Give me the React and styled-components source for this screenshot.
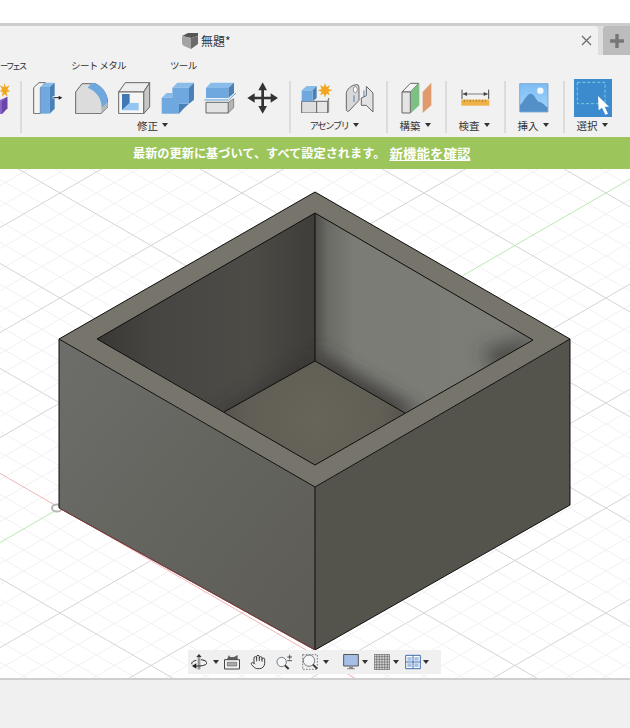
import styled, { createGlobalStyle } from "styled-components";
import { Hand } from "lucide-react";

const GlobalStyle = createGlobalStyle`
  html, body {
    margin: 0;
    padding: 0;
    background: #fff;
  }
  body {
    font-family: "Noto Sans CJK JP", "Noto Sans", sans-serif;
  }
`;

const Page = styled.div`
  width: 630px;
  height: 728px;
  display: flex;
  flex-direction: column;
  overflow: hidden;
  background: #fff;
`;
const TopStrip = styled.div`
  height: 23px;
  background: #fff;
  border-bottom: 3px solid #cdcdcd;
`;
const TabBar = styled.div`
  height: 29px;
  display: flex;
  background: #dedede;
`;
const FileTab = styled.div`
  width: 598px;
  display: flex;
  align-items: center;
  padding: 0 5px 0 182px;
  box-sizing: border-box;
  background: #f1f1f1;
  border-top-right-radius: 4px;
`;
const FileTitle = styled.span`
  margin-left: 3px;
  font-size: 12px;
  color: #333;
  flex: 1;
`;
const CloseButton = styled.span`
  width: 14px;
  height: 14px;
  display: flex;
  align-items: center;
  justify-content: center;
`;
const NewTab = styled.div`
  width: 27px;
  margin-left: 5px;
  display: flex;
  align-items: center;
  justify-content: center;
  background: #bcbcbc;
  border-top-left-radius: 3px;
`;
const Toolbar = styled.div`
  height: 82px;
  background: #f1f1f1;
  display: flex;
  flex-direction: column;
`;
const SectionRow = styled.div`
  height: 24px;
  display: flex;
  gap: 44px;
  padding-top: 3px;
  box-sizing: border-box;
`;
const SectionName = styled.span`
  font-size: 9.5px;
  letter-spacing: -0.6px;
  line-height: 15px;
  color: #333;
  white-space: nowrap;
`;
const ClippedSection = styled(SectionName)`
  width: 27px;
  font-size: 8.5px;
  letter-spacing: -2.1px;
`;
const Ribbon = styled.div`
  flex: 1;
  display: flex;
  align-items: flex-start;
`;
const Divider = styled.div`
  width: 2px;
  height: 52px;
  margin-top: 2px;
  background: #dcdcdc;
`;
const Group = styled.div`
  width: ${(p) => p.$width}px;
  display: flex;
  flex-direction: column;
`;
const IconRow = styled.div`
  height: 38px;
  display: flex;
  align-items: center;
  gap: ${(p) => p.$gap || 0}px;
  padding-left: ${(p) => p.$left || 0}px;
`;
const GroupLabel = styled.div`
  height: 16px;
  display: flex;
  align-items: center;
  justify-content: center;
  gap: 4px;
  padding-right: ${(p) => p.$shift || 0}px;
  font-size: ${(p) => (p.$narrow ? 9.5 : 10.5)}px;
  letter-spacing: ${(p) => (p.$narrow ? -1.6 : 0)}px;
  color: #333;
  white-space: nowrap;
`;
const Caret = styled.span`
  width: 0;
  height: 0;
  border-left: 3px solid transparent;
  border-right: 3px solid transparent;
  border-top: 4px solid #333;
`;
const Banner = styled.div`
  height: 32px;
  display: flex;
  align-items: center;
  padding-left: 133px;
  background: #9cc55b;
  color: #fff;
  font-size: 12.2px;
  font-weight: 700;
  white-space: nowrap;
`;
const BannerLink = styled.a`
  margin-left: 4px;
  color: #fff;
  font-size: 13.5px;
  text-decoration: underline;
`;
const Viewport = styled.div`
  position: relative;
  height: 509px;
  overflow: hidden;
  background: #fff;
`;
const Scene = styled.svg`
  display: block;
`;
const NavBar = styled.div`
  position: absolute;
  left: 188px;
  bottom: 4px;
  width: 253px;
  height: 24px;
  display: flex;
  align-items: center;
  background: #f0f0f0;
`;
const NavItem = styled.span`
  display: flex;
  margin-left: ${(p) => p.$left}px;
`;
const NavCaret = styled(Caret)`
  margin-left: ${(p) => p.$left}px;
`;
const StatusArea = styled.div`
  flex: 1;
  background: #f0f0f0;
  border-top: 2px solid #cfcfcf;
`;

// drawn on a 3x grid, so a 96 wide box comes out 32px on the page
function Icon({ box, children }) {
  const [, , w, h] = box.split(" ").map(Number);
  return (
    <svg width={w / 3} height={h / 3} viewBox={box} strokeLinejoin="round">
      {children}
    </svg>
  );
}

const BLUE = "#6fa8de";
const BLUE_TOP = "#8abcea";
const BLUE_SIDE = "#4b80b6";
const EDGE = "#666";

const PressPull = () => (
  <Icon box="98 95 96 97">
    <path d="M100 190V112L116 97H135L120 112V190Z" fill="#f4f4f4" stroke={EDGE} strokeWidth="3" />
    <path d="M120 110H148V190H120Z" fill={BLUE} />
    <path d="M120 110L134 97H163L148 110Z" fill={BLUE_TOP} />
    <path d="M148 110L163 97V175L148 190Z" fill={BLUE_SIDE} />
    <path d="M157 141H177" stroke="#f4f4f4" strokeWidth="7" />
    <path d="M159 142H177" stroke="#222" strokeWidth="3" />
    <path d="M175 136L186 142L175 148Z" fill="#222" />
  </Icon>
);

const Fillet = () => (
  <Icon box="224 95 100 97">
    <path d="M226 190V125L245 100H285C305 110 322 130 322 160V170L303 190Z" fill="#dcdcdc" stroke={EDGE} strokeWidth="3" />
    <path d="M303 190V172L322 155V170Z" fill="#b9b9b9" />
    <path d="M262 112L274 97C300 100 322 122 322 156L304 172C304 145 288 122 262 112Z" fill={BLUE} />
  </Icon>
);

const Shell = () => (
  <Icon box="353 95 98 97">
    <path d="M355 125L375 97H448L430 125Z" fill="#eeeeee" stroke={EDGE} strokeWidth="3" />
    <path d="M430 125L448 97V170L430 190Z" fill="#c6c6c6" stroke={EDGE} strokeWidth="3" />
    <path d="M355 125H430V190H355Z" fill="#f5f5f5" stroke={EDGE} strokeWidth="3" />
    <path d="M365 131H388V158L365 180Z" fill="#3f78b4" />
    <path d="M388 158H415V180H365Z" fill="#93c5f2" />
  </Icon>
);

const Combine = () => (
  <Icon box="1 95 100 97">
    <path d="M35 112L50 97H100L85 112Z" fill={BLUE_TOP} />
    <path d="M3 142L18 128H35V142Z" fill={BLUE_TOP} />
    <path d="M85 112L100 97V148L85 160Z" fill={BLUE_SIDE} />
    <path d="M55 160H85L70 174L55 190Z" fill={BLUE_SIDE} />
    <path d="M3 142H35V112H85V160H55V190H3Z" fill={BLUE} />
  </Icon>
);

const Split = () => (
  <Icon box="132 95 98 97">
    <path d="M138 113L152 97H222L205 113Z" fill={BLUE_TOP} />
    <path d="M205 113L222 97V128L205 143Z" fill={BLUE_SIDE} />
    <path d="M138 113H205V143H138Z" fill={BLUE} />
    <path d="M138 156H205V188H138Z" fill="#e3e3e3" stroke={EDGE} strokeWidth="3" />
    <path d="M205 188L221 172V145L205 156Z" fill="#b5b5b5" stroke={EDGE} strokeWidth="2" />
    <path d="M133 149H206L228 128" fill="none" stroke="#5b9fd8" strokeWidth="3" />
  </Icon>
);

const Move = () => (
  <Icon box="262 95 94 96">
    <path
      d="M309 96L322 120H313V139H333V129L355 143L333 157V147H313V167H322L309 190L296 167H305V147H285V157L263 143L285 129V139H305V120H296Z"
      fill="#333"
    />
  </Icon>
);

const Assembly = () => (
  <Icon box="903 250 96 92">
    <path d="M905 305H950V340H905Z" fill="#dedede" stroke={EDGE} strokeWidth="3" />
    <path d="M950 305H983V340H950Z" fill="#e6e6e6" stroke={EDGE} strokeWidth="3" />
    <path d="M983 340L986 335V295L983 305Z" fill="#bbb" stroke={EDGE} strokeWidth="2" />
    <path d="M905 272L920 259H950L938 272Z" fill={BLUE_TOP} />
    <path d="M938 272L950 259V295L938 305Z" fill={BLUE_SIDE} />
    <path d="M905 272H938V305H905Z" fill={BLUE} />
    <path
      d="M975 250L979 262L990 257L985 268L997 272L985 276L990 287L979 282L975 294L971 282L960 287L965 276L953 272L965 268L960 257L971 262Z"
      fill="#f2a51f"
    />
  </Icon>
);

const Joint = () => (
  <Icon box="76 98 88 90">
    <path d="M80 178V130C80 118 95 103 112 103C118 103 118 110 118 120V150L88 182C84 184 80 182 80 178Z" fill="#d8d8d8" stroke={EDGE} strokeWidth="3" />
    <ellipse cx="107" cy="118" rx="6" ry="9" fill="#fff" stroke={EDGE} strokeWidth="2" />
    <path d="M125 143L140 136V108L160 128V185L140 165H125Z" fill="#e2e2e2" stroke={EDGE} strokeWidth="3" />
    <path d="M103 135V155M133 120V140" stroke="#4b80b6" strokeWidth="3" />
  </Icon>
);

const Plane = () => (
  <Icon box="242 95 92 95">
    <path d="M245 125L270 99H295L270 125Z" fill="#f4f4f4" stroke={EDGE} strokeWidth="3" />
    <path d="M245 125H270V188H245Z" fill="#e4e4e4" stroke={EDGE} strokeWidth="3" />
    <path d="M272 122L297 97V165L272 188Z" fill="#7dc084" />
    <path d="M307 125L333 97V165L307 188Z" fill="#e09a6c" />
  </Icon>
);

const Measure = () => (
  <Icon box="452 268 87 52">
    <path d="M455 270V298M535 270V298" stroke="#444" strokeWidth="3" />
    <path d="M458 283H532" stroke="#444" strokeWidth="2" />
    <path d="M457 283L470 277V289ZM533 283L520 277V289Z" fill="#444" />
    <path d="M453 300H537V318H453Z" fill="#efb045" />
    <path d="M462 300V307M471 300V305M480 300V307M489 300V305M498 300V307M507 300V305M516 300V307M525 300V305" stroke="#8a6a2a" strokeWidth="2" />
  </Icon>
);

const InsertImage = () => (
  <Icon box="626 249 90 89">
    <defs>
      <linearGradient id="sky" x1="0" y1="0" x2="0" y2="1">
        <stop offset="0" stopColor="#7cbcf4" />
        <stop offset="1" stopColor="#a8d6fb" />
      </linearGradient>
    </defs>
    <path d="M628 251H713V336H628Z" fill="url(#sky)" stroke="#5f93c0" strokeWidth="2" />
    <path d="M629 315C640 305 650 280 662 281C674 282 678 305 688 306C698 307 706 320 712 322V335H629Z" fill="#5490c8" />
    <circle cx="690" cy="272" r="9.5" fill="#f4f8fb" />
  </Icon>
);

const SelectTool = () => (
  <Icon box="792 237 114 114">
    <path d="M792 237H906V351H792Z" fill="#3d8bcf" />
    <path d="M802 247H885V311H802Z" fill="none" stroke="#86dce0" strokeWidth="2.5" strokeDasharray="9 6" />
    <path d="M864 288L897 320H884L894 341L886 344L876 323L866 331Z" fill="#fff" />
  </Icon>
);

const SurfaceStub = () => (
  <Icon box="0 246 30 98">
    <path d="M0 300L22 290V325L6 342H0Z" fill="#8a63c8" />
    <path d="M6 304L22 290V325L6 342Z" fill="#6a46a8" />
    <path
      d="M14 248L17 262L29 256L22 268L30 274L20 276L22 290L14 282L6 290L8 276L0 274L6 268L0 256L11 262Z"
      fill="#f2a51f"
    />
  </Icon>
);

const CubeMark = () => (
  <svg width="16" height="16" viewBox="0 0 16 16">
    <path d="M0 3L6 0H16V3L9 5Z" fill="#555" />
    <path d="M0 3L9 5V16L2 13Q0 12 0 10Z" fill="#a3a3a3" />
    <path d="M9 5L16 3V11L9 16Z" fill="#6b6b6b" />
  </svg>
);

const NavIcon = ({ children }) => (
  <svg width="16" height="16" viewBox="0 0 48 48" strokeLinejoin="round">
    {children}
  </svg>
);

const OrbitIcon = () => (
  <NavIcon>
    <path d="M24 6V46" stroke="#333" strokeWidth="7" />
    <path d="M24 6V46" stroke="#fff" strokeWidth="3" />
    <path d="M24 0L32 9H16Z" fill="#333" />
    <path d="M30 17C44 19 50 24 46 30C42 34 30 37 14 36" fill="none" stroke="#222" strokeWidth="3" />
    <path d="M16 19C6 21 0 26 3 31" fill="none" stroke="#222" strokeWidth="3" />
    <path d="M16 28L3 36L16 44Z" fill="#222" />
  </NavIcon>
);

const HomeIcon = () => (
  <NavIcon>
    <path d="M8 17L15 3L18 9H30L41 3V17Z" fill="#5f5f5f" />
    <path d="M1.5 17H46.5V45H1.5Z" fill="#f2f2f2" stroke="#444" strokeWidth="3" />
    <path d="M10 25H38V36H10Z" fill="#aaa" stroke="#444" strokeWidth="1.5" />
  </NavIcon>
);

const ZoomIcon = () => (
  <NavIcon>
    <circle cx="17" cy="24" r="14" fill="#f4f6f8" stroke="#5d6670" strokeWidth="2.5" />
    <path d="M27 34L38 45" stroke="#333" strokeWidth="6" />
    <path d="M41 2V16M34 9H48M34 20H48" stroke="#333" strokeWidth="2.5" />
  </NavIcon>
);

const FitIcon = () => (
  <NavIcon>
    <path d="M2 2H46V46H2Z" fill="none" stroke="#444" strokeWidth="2" strokeDasharray="5 4" />
    <circle cx="21" cy="20" r="17" fill="#f4f6f8" stroke="#5d6670" strokeWidth="2.5" />
    <path d="M33 32L45 44" stroke="#333" strokeWidth="6" />
  </NavIcon>
);

const DisplayIcon = () => (
  <NavIcon>
    <path d="M2 1.5H46V36H2Z" fill="#a6bfe8" stroke="#555" strokeWidth="3" />
    <path d="M18 38H30V43H36V46H12V43H18Z" fill="#888" />
  </NavIcon>
);

const gridTicks = [8, 16, 24, 32, 40];
const GridIcon = () => (
  <NavIcon>
    <path d="M1 1H47V47H1Z" fill="#d6d6d6" stroke="#555" strokeWidth="2" />
    {gridTicks.map((t) => (
      <path key={t} d={`M${t} 1V47M1 ${t}H47`} stroke="#666" strokeWidth="2" />
    ))}
  </NavIcon>
);

const ViewsIcon = () => (
  <NavIcon>
    <path d="M2 4H46V44H2Z" fill="#fff" stroke="#3f6ca8" strokeWidth="3" />
    <path d="M24 4V44M2 24H46" stroke="#3f6ca8" strokeWidth="3" />
    <path d="M7 9H20V20H7ZM28 9H41V20H28ZM7 28H20V39H7ZM28 28H41V39H28Z" fill="#a9c1e4" />
  </NavIcon>
);

// the work plane: lines in both isometric directions through the origin at (57, 508)
const SLOPE = 0.577;
const STEP = 21;
const gridLines = [];
for (let k = -32; k <= 24; k++) {
  gridLines.push({ id: `a${k}`, k, c: 473.4 + k * STEP, s: SLOPE });
}
for (let k = -18; k <= 24; k++) {
  gridLines.push({ id: `b${k}`, k, c: 542.6 + k * STEP, s: -SLOPE });
}

const RIGHT_WALL = "315,213 533,340 405,413 315,361";
const LEFT_WALL = "97,339 315,213 315,361 224,412";
const FLOOR = "224,412 315,361 405,413 315,465";

function Model() {
  return (
    <g>
      <defs>
        <linearGradient id="faceLeft" x1="0" y1="0" x2="1" y2="1">
          <stop offset="0" stopColor="#6d6e6a" />
          <stop offset="1" stopColor="#5c5b54" />
        </linearGradient>
        <linearGradient id="wallLeft" gradientUnits="userSpaceOnUse" x1="97" y1="0" x2="315" y2="0">
          <stop offset="0" stopColor="#393733" />
          <stop offset="0.25" stopColor="#474541" />
          <stop offset="0.7" stopColor="#4d4b46" />
          <stop offset="1" stopColor="#3f3d39" />
        </linearGradient>
        <linearGradient id="wallRight" gradientUnits="userSpaceOnUse" x1="315" y1="0" x2="533" y2="0">
          <stop offset="0" stopColor="#4f4e4a" />
          <stop offset="0.06" stopColor="#6b6b66" />
          <stop offset="0.18" stopColor="#7b7c76" />
          <stop offset="1" stopColor="#7c7d77" />
        </linearGradient>
        <radialGradient id="floorGlow" gradientUnits="userSpaceOnUse" cx="315" cy="420" r="95">
          <stop offset="0" stopColor="#67655a" />
          <stop offset="0.7" stopColor="#615f55" />
          <stop offset="1" stopColor="#53514a" />
        </radialGradient>
        <filter id="soft" x="-30%" y="-30%" width="160%" height="160%">
          <feGaussianBlur stdDeviation="9" />
        </filter>
        <clipPath id="rightWallClip">
          <polygon points={RIGHT_WALL} />
        </clipPath>
        <clipPath id="leftWallClip">
          <polygon points={LEFT_WALL} />
        </clipPath>
      </defs>
      <polygon points="59,339 315,487 315,650 59,508" fill="url(#faceLeft)" />
      <polygon points="315,487 570,339 570,505 315,650" fill="#55544c" />
      <polygon points="59,339 315,192 570,339 315,487" fill="#77756b" />
      <polygon points={LEFT_WALL} fill="url(#wallLeft)" />
      <g clipPath="url(#leftWallClip)">
        <polygon points="215,415 315,356 315,375 225,425" fill="#2e2c29" opacity="0.6" filter="url(#soft)" />
      </g>
      <polygon points={RIGHT_WALL} fill="url(#wallRight)" />
      <g clipPath="url(#rightWallClip)">
        <polygon points="315,350 420,412 395,420 315,375" fill="#3a3935" filter="url(#soft)" />
        <polygon points="480,352 540,335 505,375" fill="#33322e" opacity="0.7" filter="url(#soft)" />
      </g>
      <polygon points={FLOOR} fill="url(#floorGlow)" />
      <g fill="none" stroke="#0d0d0d" strokeWidth="1">
        <polygon points="59,339 315,192 570,339 570,505 315,650 59,508" />
        <polyline points="59,339 315,487 570,339" />
        <path d="M315 487V650" />
        <polygon points="97,339 315,213 533,340 315,465" />
        <path d="M315 213V361M224 412L315 361L405 413" />
      </g>
      <path d="M59 508L315 650" stroke="#e05a5a" strokeWidth="0.8" opacity="0.7" />
    </g>
  );
}

function WorkPlane() {
  const minor = gridLines.filter((l) => l.k % 5 !== 0);
  const major = gridLines.filter((l) => l.k % 5 === 0 && l.k !== 0);
  return (
    <g>
      {minor.map((l) => (
        <line key={l.id} x1="0" y1={l.c} x2="630" y2={l.c + l.s * 630} stroke="#f1f1f1" />
      ))}
      {major.map((l) => (
        <line key={l.id} x1="0" y1={l.c} x2="630" y2={l.c + l.s * 630} stroke="#d4d4d4" />
      ))}
      <line x1="0" y1="473.4" x2="630" y2="836.9" stroke="#f0b4b4" />
      <line x1="0" y1="542.6" x2="630" y2="179.1" stroke="#bce8b4" />
      <ellipse cx="57" cy="508" rx="5" ry="3.6" fill="#fff" stroke="#b5b5b5" strokeWidth="2" />
    </g>
  );
}

export default function App() {
  return (
    <Page>
      <GlobalStyle />
      <TopStrip />
      <TabBar>
        <FileTab>
          <CubeMark />
          <FileTitle>無題*</FileTitle>
          <CloseButton>
            <svg width="11" height="11" viewBox="0 0 11 11">
              <path d="M1 1L10 10M10 1L1 10" stroke="#707070" strokeWidth="1.4" />
            </svg>
          </CloseButton>
        </FileTab>
        <NewTab>
          <svg width="14" height="14" viewBox="0 0 14 14">
            <path d="M7 0V14M0 7H14" stroke="#777" strokeWidth="3.4" />
          </svg>
        </NewTab>
      </TabBar>
      <Toolbar>
        <SectionRow>
          <ClippedSection>ーフェス</ClippedSection>
          <SectionName>シート メタル</SectionName>
          <SectionName>ツール</SectionName>
        </SectionRow>
        <Ribbon>
          <Group $width={20}>
            <IconRow>
              <SurfaceStub />
            </IconRow>
          </Group>
          <Divider />
          <Group $width={267}>
            <IconRow $left={11} $gap={10}>
              <PressPull />
              <Fillet />
              <Shell />
              <Combine />
              <Split />
              <Move />
            </IconRow>
            <GroupLabel $shift={6}>
              修正 <Caret />
            </GroupLabel>
          </Group>
          <Divider />
          <Group $width={95}>
            <IconRow $left={10} $gap={12}>
              <Assembly />
              <Joint />
            </IconRow>
            <GroupLabel $shift={9} $narrow>
              アセンブリ <Caret />
            </GroupLabel>
          </Group>
          <Divider />
          <Group $width={57}>
            <IconRow $left={13}>
              <Plane />
            </IconRow>
            <GroupLabel $shift={3}>
              構築 <Caret />
            </GroupLabel>
          </Group>
          <Divider />
          <Group $width={57}>
            <IconRow $left={14}>
              <Measure />
            </IconRow>
            <GroupLabel $shift={3}>
              検査 <Caret />
            </GroupLabel>
          </Group>
          <Divider />
          <Group $width={57}>
            <IconRow $left={13}>
              <InsertImage />
            </IconRow>
            <GroupLabel $shift={3}>
              挿入 <Caret />
            </GroupLabel>
          </Group>
          <Divider />
          <Group $width={65}>
            <IconRow $left={9}>
              <SelectTool />
            </IconRow>
            <GroupLabel $shift={11}>
              選択 <Caret />
            </GroupLabel>
          </Group>
        </Ribbon>
      </Toolbar>
      <Banner>
        最新の更新に基づいて、すべて設定されます。
        <BannerLink href="#">新機能を確認</BannerLink>
      </Banner>
      <Viewport>
        <Scene width="630" height="509" viewBox="0 169 630 509">
          <WorkPlane />
          <Model />
        </Scene>
        <NavBar>
          <NavItem $left={3}>
            <OrbitIcon />
          </NavItem>
          <NavCaret $left={6} />
          <NavItem $left={5}>
            <HomeIcon />
          </NavItem>
          <NavItem $left={10}>
            <Hand size={16} strokeWidth={1.4} color="#333" />
          </NavItem>
          <NavItem $left={10}>
            <ZoomIcon />
          </NavItem>
          <NavItem $left={10}>
            <FitIcon />
          </NavItem>
          <NavCaret $left={5} />
          <NavItem $left={14}>
            <DisplayIcon />
          </NavItem>
          <NavCaret $left={3} />
          <NavItem $left={6}>
            <GridIcon />
          </NavItem>
          <NavCaret $left={3} />
          <NavItem $left={6}>
            <ViewsIcon />
          </NavItem>
          <NavCaret $left={2} />
        </NavBar>
      </Viewport>
      <StatusArea />
    </Page>
  );
}
